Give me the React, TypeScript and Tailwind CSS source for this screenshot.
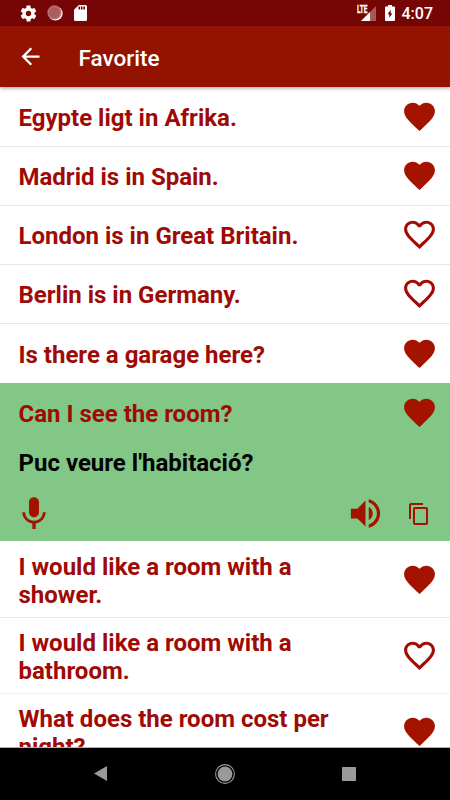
import React from "react";

const HEART =
  "M12 21.35l-1.45-1.32C5.4 15.36 2 12.28 2 8.5 2 5.42 4.42 3 7.5 3c1.74 0 3.41.81 4.5 2.09C13.09 3.81 14.76 3 16.5 3 19.58 3 22 5.42 22 8.5c0 3.78-3.4 6.86-8.55 11.54L12 21.35z";
const HEART_OUTLINE =
  "M16.5 3c-1.74 0-3.41.81-4.5 2.09C10.91 3.81 9.24 3 7.5 3 4.42 3 2 5.42 2 8.5c0 3.78 3.4 6.86 8.55 11.54L12 21.35l1.45-1.32C18.6 15.36 22 12.28 22 8.5 22 5.42 19.58 3 16.5 3zm-4.4 15.55l-.1.1-.1-.1C7.14 14.24 4 11.39 4 8.5 4 6.5 5.5 5 7.5 5c1.54 0 3.04.99 3.57 2.36h1.87C13.46 5.99 14.96 5 16.5 5c2 0 3.5 1.5 3.5 3.5 0 2.89-3.14 5.74-7.9 10.05z";

function Icon({ d, className }: { d: string; className: string }) {
  return (
    <svg viewBox="0 0 24 24" fill="currentColor" className={`shrink-0 ${className}`}>
      <path d={d} />
    </svg>
  );
}

function Heart({ filled }: { filled: boolean }) {
  return filled ? (
    <Icon d={HEART} className="mb-[0.5px] size-[37px] text-[#a31300]" />
  ) : (
    <Icon d={HEART_OUTLINE} className="mb-[0.5px] size-[37px] text-[#a30a05]" />
  );
}

function Row({ text, filled, className }: { text: string; filled: boolean; className: string }) {
  return (
    <div className={`flex shrink-0 items-center justify-between pr-3 pl-[18.5px] ${className}`}>
      <p className="w-[330px] pt-0.5 text-[24px] leading-[28px] font-bold text-[#a00a05]">{text}</p>
      <Heart filled={filled} />
    </div>
  );
}

function StatusBar() {
  return (
    <div className="flex h-[26px] shrink-0 items-center justify-between bg-[#760606] pr-[17px] pl-[19px] text-white">
      <div className="flex items-center">
        <Icon
          className="size-[19px]"
          d="M19.43 12.98c.04-.32.07-.64.07-.98s-.03-.66-.07-.98l2.11-1.65c.19-.15.24-.42.12-.64l-2-3.46c-.12-.22-.39-.3-.61-.22l-2.49 1c-.52-.4-1.08-.73-1.69-.98l-.38-2.65C14.46 2.18 14.25 2 14 2h-4c-.25 0-.46.18-.49.42l-.38 2.65c-.61.25-1.17.59-1.69.98l-2.49-1c-.23-.09-.49 0-.61.22l-2 3.46c-.13.22-.07.49.12.64l2.11 1.65c-.04.32-.07.65-.07.98s.03.66.07.98l-2.11 1.65c-.19.15-.24.42-.12.64l2 3.46c.12.22.39.3.61.22l2.49-1c.52.4 1.08.73 1.69.98l.38 2.65c.03.24.24.42.49.42h4c.25 0 .46-.18.49-.42l.38-2.65c.61-.25 1.17-.59 1.69-.98l2.49 1c.23.09.49 0 .61-.22l2-3.46c.12-.22.07-.49-.12-.64l-2.11-1.65zM12 15.5c-1.93 0-3.5-1.57-3.5-3.5s1.57-3.5 3.5-3.5 3.5 1.57 3.5 3.5-1.57 3.5-3.5 3.5z"
        />
        <svg viewBox="0 0 16 16" className="ml-[9px] size-4" fill="none">
          <circle cx="8.4" cy="8.4" r="7.2" fill="white" />
          <circle cx="7.4" cy="7.4" r="7.1" fill="#ad5c5c" />
          <circle cx="7.4" cy="7.4" r="6" stroke="#cf9c9c" strokeWidth="1" strokeDasharray="1 1" />
        </svg>
        <svg viewBox="4 2 16 20" fill="currentColor" className="ml-[10.5px] h-4 w-[13px]" preserveAspectRatio="none">
          <path d="M18 2h-8L4 8v12c0 1.1.9 2 2 2h12c1.1 0 2-.9 2-2V4c0-1.1-.9-2-2-2zm-6.5 5.5h-2V4h2v3.500zm3 0h-2V4h2v3.500zm3 0h-2V4h2v3.500z" />
        </svg>
      </div>
      <div className="flex items-center">
        <svg viewBox="0 0 20 18" className="h-[18px] w-5">
          <path d="M19 2V17H14V7z" fill="#a95858" />
          <path d="M13.4 7.600V17H4z" fill="white" />
          <text
            x="0"
            y="8.8"
            fill="white"
            stroke="white"
            strokeWidth=".3"
            fontSize="10.5"
            fontWeight="700"
            textLength="10.5"
            lengthAdjust="spacingAndGlyphs"
          >
            LTE
          </text>
        </svg>
        <svg viewBox="7 2 10 20" fill="currentColor" className="ml-2 h-4 w-2.5" preserveAspectRatio="none">
          <path d="M15.67 4H14V2h-4v2H8.33C7.6 4 7 4.6 7 5.33v15.33C7 21.4 7.6 22 8.33 22h7.33c.74 0 1.34-.6 1.34-1.33V5.33C17 4.6 16.4 4 15.67 4zM11.200 18v-4.500H9.500L12.800 8v4.500h1.700L11.200 18z" />
        </svg>
        <span className="ml-[7px] pt-0.5 text-[16px] leading-6 font-medium">4:07</span>
      </div>
    </div>
  );
}

export default function App() {
  return (
    <div className="flex h-[800px] w-[450px] flex-col overflow-hidden bg-white font-[Roboto,sans-serif]">
      <StatusBar />
      <header className="z-10 flex h-[61px] shrink-0 items-center bg-[#931300] pl-[17px] text-white shadow-[0_1px_4px_rgba(0,0,0,0.4)]">
        <Icon className="size-[27px]" d="M20 11H7.83l5.59-5.59L12 4l-8 8 8 8 1.41-1.41L7.83 13H20v-2z" />
        <h1 className="ml-[34.5px] pt-0.5 text-[22.5px] leading-7 font-medium">Favorite</h1>
      </header>
      <main className="flex min-h-0 flex-1 flex-col overflow-hidden pt-px">
        <Row text="Egypte ligt in Afrika." filled className="h-[59px] border-b border-[#e8e8e8]" />
        <Row text="Madrid is in Spain." filled className="h-[59px] border-b border-[#e8e8e8]" />
        <Row text="London is in Great Britain." filled={false} className="h-[59px] border-b border-[#e8e8e8]" />
        <Row text="Berlin is in Germany." filled={false} className="h-[59px] border-b border-[#e8e8e8]" />
        <Row text="Is there a garage here?" filled className="h-[59px]" />
        <section className="flex h-[158px] shrink-0 flex-col bg-[#82c785]">
          <Row text="Can I see the room?" filled className="h-[59px]" />
          <p className="h-[51.5px] pt-[7px] pl-[18.5px] text-[24px] leading-[28px] font-bold text-black">
            Puc veure l'habitació?
          </p>
          <div className="flex h-10 items-center pl-[13.7px] text-[#a31300]">
            <Icon
              className="size-10"
              d="M12 14c1.66 0 2.99-1.34 2.99-3L15 5c0-1.66-1.34-3-3-3S9 3.34 9 5v6c0 1.66 1.34 3 3 3zm5.3-3c0 3-2.54 5.1-5.3 5.1S6.7 14 6.7 11H5c0 3.41 2.72 6.23 6 6.72V21h2v-3.28c3.28-.48 6-3.3 6-6.72h-1.7z"
            />
            <Icon
              className="ml-[292.5px] size-[39px]"
              d="M3 9v6h4l5 5V4L7 9H3zm13.5 3c0-1.77-1.02-3.29-2.5-4.03v8.05c1.48-.73 2.5-2.25 2.5-4.02zM14 3.23v2.06c2.89.86 5 3.54 5 6.71s-2.11 5.85-5 6.71v2.06c4.01-.91 7-4.49 7-8.77s-2.99-7.86-7-8.77z"
            />
            <Icon
              className="ml-[22px] size-6"
              d="M16 1H4c-1.1 0-2 .9-2 2v14h2V3h12V1zm3 4H8c-1.1 0-2 .9-2 2v14c0 1.1.9 2 2 2h11c1.1 0 2-.9 2-2V7c0-1.1-.9-2-2-2zm0 16H8V7h11v14z"
            />
          </div>
        </section>
        <Row text="I would like a room with a shower." filled className="h-[77px] border-b border-[#e8e8e8] pt-px" />
        <Row text="I would like a room with a bathroom." filled={false} className="h-[76px] border-b border-[#efefef]" />
        <Row text="What does the room cost per night?" filled className="h-[76px]" />
      </main>
      <nav className="flex h-[53px] shrink-0 items-center border-t border-[#b0b0b0] bg-black pb-px text-[#999999]">
        <svg viewBox="0 0 13 15" className="ml-[94px] h-[15px] w-[13px]" fill="currentColor">
          <path d="M13 0v15L0 7.5z" />
        </svg>
        <svg viewBox="0 0 20 20" className="ml-[108px] size-5">
          <circle cx="10" cy="10" r="9.4" fill="none" stroke="currentColor" strokeWidth="1.1" />
          <circle cx="10" cy="10" r="7.4" fill="currentColor" />
        </svg>
        <svg viewBox="0 0 14 14" className="ml-[107px] size-3.5" fill="currentColor">
          <rect width="14" height="14" rx=".5" />
        </svg>
      </nav>
    </div>
  );
}
